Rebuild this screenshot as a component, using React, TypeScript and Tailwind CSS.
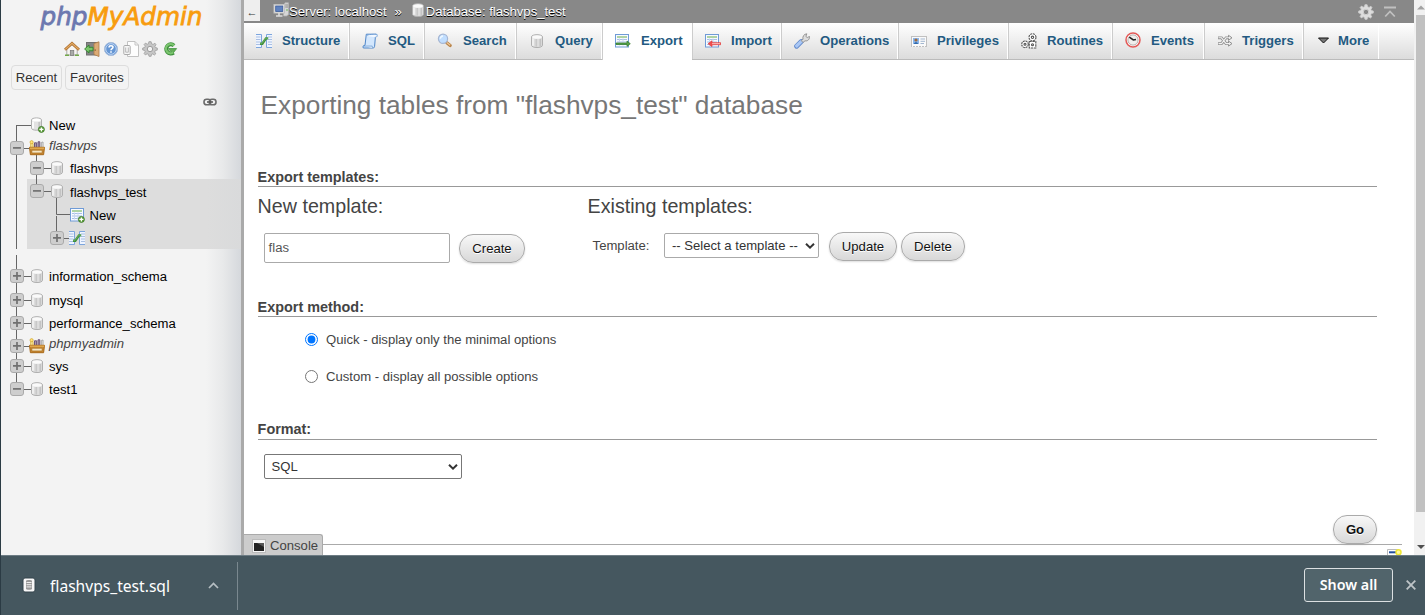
import React from "react";

type IconProps = { className?: string };

const Svg = ({ className = "", children }: { className?: string; children: React.ReactNode }) => (
  <svg viewBox="0 0 16 16" className={`h-4 w-4 shrink-0 ${className}`} fill="none">
    {children}
  </svg>
);

const DbIcon = ({ className }: IconProps) => (
  <Svg className={className}>
    <path d="M2.5 4C2.5 .9 13.5 .9 13.5 4V12.2C13.5 15.3 2.5 15.3 2.5 12.2Z" fill="#dcdcdc" stroke="#b0b0b0" />
    <path d="M4 5.2V12.8" stroke="#f4f4f4" strokeWidth="1.6" />
    <path d="M7.3 6V13.6" stroke="#c8c8c8" strokeWidth="1.6" />
    <path d="M9.3 6V13.6" stroke="#dedede" strokeWidth="1.4" />
    <path d="M11.3 6V13.2" stroke="#c3c3c3" strokeWidth="1.6" />
    <ellipse cx="8" cy="4" rx="4.9" ry="1.8" fill="#fafafa" />
  </Svg>
);

const Plus = () => (
  <>
    <circle cx="12.4" cy="12.4" r="3" fill="#5f9e3d" stroke="#3c7a28" strokeWidth=".8" />
    <path d="M12.4 10.4V14.4M10.4 12.4H14.4" stroke="#fff" strokeWidth="1.3" />
  </>
);

const DbNewIcon = () => (
  <Svg>
    <path d="M2.5 3C2.5 .2 12.5 .2 12.5 3V11C12.5 14 2.5 14 2.5 11Z" fill="#e2e2e2" stroke="#b0b0b0" />
    <path d="M4 4.5V11.5" stroke="#fafafa" strokeWidth="2" />
    <path d="M10.3 5V12" stroke="#c6c6c6" strokeWidth="2" />
    <ellipse cx="7.5" cy="3" rx="4.4" ry="1.6" fill="#fff" />
    <Plus />
  </Svg>
);

const TableBase = () => (
  <>
    <rect x="1.5" y="1.5" width="13" height="12.5" fill="#f7faff" stroke="#6f9bd6" />
    <path d="M3 4H13" stroke="#8fc27d" strokeWidth="1.4" />
    <path d="M3 6.5H13M3 9H13M3 11.5H13" stroke="#a9c0e6" />
    <path d="M5.5 5.5V12.5M9 5.5V12.5" stroke="#c9d7ee" />
  </>
);

const TableNewIcon = () => (
  <Svg>
    <TableBase />
    <Plus />
  </Svg>
);

const StructureIcon = ({ className }: IconProps) => (
  <Svg className={className}>
    <path d="M0 1.5H5.5V14.5H0M16 1.5H10.5V14.5H16" fill="#eef4ff" stroke="#7ca5dd" />
    <path d="M0 4H4.5M0 6.5H4.5M0 9H4.5M0 11.5H4.5M12 4H16M12 6.5H16M12 9H16M12 11.5H16" stroke="#a9bfe2" />
    <path d="M4 10.7H6.3L10 5.4H12.2" stroke="#3f8f3c" strokeWidth="2.4" />
    <path d="M4.3 10.4H6L9.8 5.2H12" stroke="#6db566" strokeWidth=".8" />
  </Svg>
);

const GroupIcon = () => (
  <Svg>
    <path d="M1.8 8V3.5H4V8" fill="#fff3b5" stroke="#d6ae35" />
    <circle cx="2.6" cy="2.2" r="1.6" fill="#ffe27c" stroke="#d1a52d" strokeWidth=".7" />
    <path d="M5.5 8V2.8H7.6V8M9 8V1.8H10.8V8" fill="#a797ad" stroke="#6d5478" />
    <path d="M12.3 7V2.5L14 2V7.5" fill="#f2f2f2" stroke="#a5a5a5" />
    <path d="M.5 7.3H15.5L14.6 14.7H1.4Z" fill="#c98a35" stroke="#a8691a" />
    <path d="M.8 8.2H15.2" stroke="#e3ab50" strokeWidth="1.4" />
    <path d="M2.8 10.2H13.2V13H2.8Z" fill="#f5e6c4" stroke="#a86a1a" strokeWidth=".7" />
  </Svg>
);

const HomeIcon = () => (
  <Svg>
    <path d="M2.8 8L8 3.5L13.2 8V14H2.8Z" fill="#f7f5f2" stroke="#aaa" />
    <rect x="6.3" y="9.5" width="3.5" height="5" fill="#a9aaa8" stroke="#777" strokeWidth=".7" />
    <path d="M1 8.7L8 2.3L15 8.7" stroke="#a6631f" strokeWidth="2.8" />
    <path d="M1.3 8.4L8 2.3L14.7 8.4" stroke="#e0a964" strokeWidth="1.4" />
    <path d="M1 14.3H5M11 14.3H15" stroke="#72a848" strokeWidth="1.6" />
  </Svg>
);

const ExitIcon = () => (
  <Svg>
    <rect x="2.5" y="1.5" width="12" height="12.5" fill="#858585" stroke="#707070" />
    <path d="M10 2.5L15 .8V15.5L10 13.5Z" fill="#dcab76" stroke="#ad7b47" strokeWidth=".8" />
    <path d="M11.2 8.5V9.7" stroke="#654018" />
    <path d="M.6 8L5 4V6.3H9V9.8H5V12Z" fill="#7cc56b" stroke="#2f862c" strokeWidth=".9" />
  </Svg>
);

const HelpIcon = () => (
  <Svg>
    <circle cx="8" cy="8" r="6.6" fill="#6596d4" stroke="#a9bedb" />
    <circle cx="8" cy="8" r="5.3" stroke="#d9e7fb" strokeWidth=".8" />
    <path d="M6 6.4C6 4.1 10 4.2 10 6.3C10 7.7 8 7.6 8 9.3" stroke="#fff" strokeWidth="1.5" />
    <path d="M8 10.3V11.8" stroke="#fff" strokeWidth="1.6" />
  </Svg>
);

const DocsIcon = () => (
  <Svg>
    <path d="M4.5 .5H12L15.5 4V15.5H4.5Z" fill="#fdfdfd" stroke="#c2c2c2" />
    <path d="M12 .5V4H15.5" stroke="#c2c2c2" />
    <rect x=".8" y="4.5" width="6.4" height="9" rx="1" fill="#f5f5f5" stroke="#aaa" />
    <path d="M2.7 6.5V11M5.3 6.5V11M2.5 11.2H5.5" stroke="#b7b7b7" />
  </Svg>
);

const GearShape = ({ fill, stroke, hole }: { fill: string; stroke: string; hole: string }) => (
  <>
    <path
      d="M6.9.7H9.1L9.6 2.8L11.1 3.4L12.9 2.2L14 3.7L12.9 5.3L13.4 6.6L15.3 7V9.1L13.3 9.5L12.7 11L13.8 12.8L12.4 14L10.8 12.9L9.5 13.4L9.1 15.3H7L6.5 13.4L5.1 12.8L3.4 13.9L2.1 12.6L3.2 10.8L2.6 9.4L.7 9V7L2.7 6.5L3.3 5.1L2.1 3.5L3.5 2.1L5.2 3.2L6.5 2.7Z"
      fill={fill}
      stroke={stroke}
      strokeWidth=".8"
    />
    <circle cx="8" cy="8" r="2.7" fill={hole} stroke={stroke} />
  </>
);

const ReloadIcon = () => (
  <Svg>
    <path d="M12 4.6A4.6 4.6 0 1 0 11.6 11.6" stroke="#3d8f3b" strokeWidth="4" />
    <path d="M6.3 7.6H14.6L10.7 12.6Z" fill="#64ad58" stroke="#3d8f3b" strokeWidth=".8" />
    <path d="M12 4.6A4.6 4.6 0 1 0 11.3 11.4" stroke="#7cc56f" strokeWidth="2.2" />
  </Svg>
);

const ServerIcon = () => (
  <Svg>
    <path d="M10.5 3.5L12 .8H15.5V12.5L13.5 14H10.5Z" fill="#d6d6d6" stroke="#b0b0b0" strokeWidth=".8" />
    <path d="M12.2 3H15M12.2 5H15" stroke="#8a8a8a" />
    <circle cx="14" cy="8" r=".8" fill="#5fb24a" />
    <rect x="1" y="2.5" width="10.5" height="8.5" fill="#eceae4" stroke="#c1c1c1" />
    <rect x="2.7" y="4" width="7.1" height="5.5" fill="#5f82c0" stroke="#3a5b9b" strokeWidth=".8" />
    <path d="M6 11V13.5M3 14H9.5" stroke="#ddd" strokeWidth="1.6" />
  </Svg>
);

const SqlIcon = () => (
  <Svg>
    <path d="M4.3 1.2H14C13 2.2 13.2 4 13.3 5L12.6 13.3C12.4 15 11.5 15 10.5 15H1.3C.5 13.5 1.2 12.3 3 12.3Z" fill="#d3e7fd" stroke="#4f86c8" />
    <path d="M4.4 3C4.6 1 13.6 1.4 15 1.3C15.6 3 15 4.2 13.4 4.2" fill="#f3f8ff" stroke="#5b91cf" strokeWidth=".8" />
    <path d="M1.2 13.1H10.3C10 14.3 10.5 15 11 15" fill="#f7fbff" stroke="#6397d0" strokeWidth=".8" />
  </Svg>
);

const SearchIcon = () => (
  <Svg>
    <path d="M9.8 9.8L13.2 12.6" stroke="#b98347" strokeWidth="3.2" strokeLinecap="round" />
    <path d="M9.8 9.5L13.2 12.3" stroke="#edc79a" strokeWidth="1.3" />
    <circle cx="6" cy="5.8" r="4.6" fill="#c0deff" stroke="#a5b6d3" strokeWidth="1.2" />
    <path d="M3.3 5.8A3 3 0 0 1 6 3" stroke="#eef7ff" strokeWidth="1.3" />
  </Svg>
);

const ExportIcon = () => (
  <Svg>
    <g transform="translate(-1 0)"><TableBase /></g>
    <path d="M1 10H12V8L15.3 10.7L12 13.4V11.5H1Z" fill="#5ba34a" stroke="#2f7a26" strokeWidth=".7" />
  </Svg>
);

const ImportIcon = () => (
  <Svg>
    <g transform="translate(-1 0)"><TableBase /></g>
    <path d="M15.6 9.7H7V7.8L3 10.7L7 13.6V11.7H15.6Z" fill="#f04e4e" stroke="#e23a3a" strokeWidth=".7" />
    <path d="M7 10.7H15" stroke="#ffd0cd" strokeWidth=".9" />
  </Svg>
);

const WrenchIcon = () => (
  <Svg>
    <path d="M2.6 13.2L7.3 8.5" stroke="#6189cb" strokeWidth="4.8" strokeLinecap="round" />
    <path d="M2.6 13L7.1 8.6" stroke="#a9c7f5" strokeWidth="3.2" strokeLinecap="round" />
    <path d="M7.3 7.6L9 6.3C8.3 3.5 10 1 12.8.8L11.9 3.4L13.2 4.5L15.5 3.5C15.8 6.2 13.7 8.5 11 7.8L9 9.5Z" fill="#ddd" stroke="#8c8c8c" strokeWidth=".9" />
  </Svg>
);

const PrivilegesIcon = () => (
  <Svg>
    <rect x=".5" y="3.5" width="15" height="10" fill="#fafafa" stroke="#c0c0c0" />
    <path d="M1 13.5H15" stroke="#f8f8f8" strokeDasharray="1 2" />
    <rect x="2" y="5" width="6" height="6" fill="#8ab6ec" />
    <circle cx="5" cy="7" r="1.6" fill="#a06b3d" />
    <path d="M3 11C3 8.8 7 8.8 7 11Z" fill="#2f68ab" />
    <path d="M9.5 6H14M9.5 8.3H14M9.5 10.5H13" stroke="#a3b7d0" />
  </Svg>
);

const RoutinesIcon = () => (
  <Svg>
    <g stroke="#555" strokeWidth="1.1" fill="#fff">
      <circle cx="11.5" cy="4.3" r="3.5" strokeDasharray="2 .75" />
      <circle cx="11.5" cy="4.3" r="1.2" />
      <circle cx="4" cy="11.3" r="3.3" strokeDasharray="2 .6" />
      <circle cx="4" cy="11.3" r="1" />
      <rect x="8.3" y="8.5" width="6.5" height="6.5" strokeDasharray="2.4 .7" />
      <circle cx="11.5" cy="11.7" r="1" />
    </g>
  </Svg>
);

const EventsIcon = () => (
  <Svg className="-mt-px">
    <circle cx="8" cy="8" r="7" fill="#fff" stroke="#e35a58" strokeWidth="1.5" />
    <circle cx="8" cy="8" r="5.1" fill="#f1efed" stroke="#b7afac" />
    <path d="M4.3 5.2L8.3 8L11 7.5" stroke="#222" strokeWidth="1.6" />
  </Svg>
);

const TriggersIcon = () => (
  <Svg>
    <path d="M1 4.8H4.5L9 10.6H12M1 10.6H4.5L9 4.8H12" stroke="#8f8f8f" strokeWidth="2.8" />
    <path d="M11.5 2.3L15 4.8L11.5 7.3ZM11.5 8.1L15 10.6L11.5 13.1Z" fill="#eee" stroke="#8f8f8f" />
    <path d="M1.5 4.8H4.5L9 10.6H12.5M1.5 10.6H4.5L9 4.8H12.5" stroke="#f2f2f2" strokeWidth="1.1" />
  </Svg>
);

const MoreIcon = () => (
  <Svg>
    <path d="M2.5 5H12.5L7.5 10Z" fill="#777" stroke="#111" />
  </Svg>
);

const LinkIcon = () => (
  <svg viewBox="0 0 14 8" className="h-2 w-3.5" fill="none">
    <rect x="1" y="1.2" width="6.6" height="5.6" rx="2.6" stroke="#6b6b6b" strokeWidth="1.6" />
    <rect x="6.4" y="1.2" width="6.6" height="5.6" rx="2.6" stroke="#6b6b6b" strokeWidth="1.6" />
    <path d="M4 4H10" stroke="#555" strokeWidth="1.5" />
  </svg>
);

const Expander = ({ open }: { open: boolean }) => (
  <svg viewBox="0 0 14 14" className="h-3.5 w-3.5 shrink-0">
    <rect x=".5" y=".5" width="13" height="13" rx="2.5" fill="#cecece" stroke="#aaa" />
    <path d={open ? "M3 6.9H11" : "M3 6.9H11M7 3V11"} stroke="#707070" strokeWidth="1.7" />
  </svg>
);

type Row = {
  label: string;
  height: string;
  indent: string;
  open?: boolean;
  icon: React.ReactNode;
  group?: boolean;
  gap: string;
};

const TreeRow = ({ row }: { row: Row }) => (
  <div className={`flex items-center ${row.height} ${row.indent}`}>
    <span className="flex w-[19px] shrink-0 items-center">{row.open !== undefined && <Expander open={row.open} />}</span>
    {row.icon}
    <span
      className={`whitespace-nowrap text-[13.12px] leading-4 ${row.gap} ${
        row.group ? "-mt-1 italic text-[#444]" : "mt-0.5 text-black"
      }`}
    >
      {row.label}
    </span>
  </div>
);

const topRows: Row[] = [
  { label: "New", height: "h-[22px]", indent: "pl-[9px]", icon: <DbNewIcon />, gap: "ml-1" },
  { label: "flashvps", height: "h-6", indent: "pl-[9px]", open: true, icon: <GroupIcon />, group: true, gap: "ml-1" },
];
const childRow: Row = { label: "flashvps", height: "h-4", indent: "pl-[29px]", open: true, icon: <DbIcon />, gap: "ml-[5px]" };
const selectedRows: Row[] = [
  { label: "flashvps_test", height: "h-6", indent: "pl-[3px]", open: true, icon: <DbIcon />, gap: "ml-[5px] pt-0.5" },
  { label: "New", height: "h-6", indent: "pl-[23px]", icon: <TableNewIcon />, gap: "ml-[4.5px]" },
  { label: "users", height: "h-[22px]", indent: "pl-[23px]", open: false, icon: <StructureIcon />, gap: "ml-[4.5px]" },
];
const bottomRows: Row[] = [
  { label: "information_schema", height: "h-[22px]", indent: "pl-[9px]", open: false, icon: <DbIcon />, gap: "ml-1" },
  { label: "mysql", height: "h-[26px]", indent: "pl-[9px]", open: false, icon: <DbIcon />, gap: "ml-1" },
  { label: "performance_schema", height: "h-5", indent: "pl-[9px]", open: false, icon: <DbIcon />, gap: "ml-1" },
  { label: "phpmyadmin", height: "h-[26px]", indent: "pl-[9px]", open: false, icon: <GroupIcon />, group: true, gap: "ml-1" },
  { label: "sys", height: "h-[14px]", indent: "pl-[9px]", open: false, icon: <DbIcon />, gap: "ml-1" },
  { label: "test1", height: "h-8", indent: "pl-[9px]", open: true, icon: <DbIcon />, gap: "ml-1" },
];

const Sidebar = () => (
  <aside className="flex w-[240px] shrink-0 flex-col bg-[linear-gradient(90deg,#f3f3f3_0,#f3f3f3_205px,#e8e9ea_222px,#d5d8dc_240px)]">
    <svg className="h-[34px] w-full" viewBox="1 0 240 34">
      <text
        x="40.5"
        y="25"
        fontSize="24.5"
        fontStyle="italic"
        fontFamily="DejaVu Sans, sans-serif"
        textLength="162"
        lengthAdjust="spacingAndGlyphs"
        strokeWidth=".8"
      >
        <tspan fill="#6c78af" stroke="#6c78af">php</tspan>
        <tspan fill="#f89c0e" stroke="#f89c0e">MyAdmin</tspan>
      </text>
    </svg>
    <div className="flex h-[30px] items-center gap-[3.6px] pl-[63px]">
      <HomeIcon />
      <ExitIcon />
      <HelpIcon />
      <DocsIcon />
      <Svg><GearShape fill="#c6c6c6" stroke="#9c9c9c" hole="#f4f4f4" /></Svg>
      <ReloadIcon />
    </div>
    <div className="mt-px flex gap-[3px] pl-[10px] text-[13.1px] text-[#333]">
      <span className="flex h-[25px] w-[51px] items-center justify-center rounded border border-[#ddd]">Recent</span>
      <span className="flex h-[25px] w-[64px] items-center justify-center rounded border border-[#ddd]">Favorites</span>
    </div>
    <div className="flex h-6 items-center pl-[202px]">
      <LinkIcon />
    </div>
    <div className="relative">
      <svg className="absolute left-0 top-0 h-[290px] w-[100px]" viewBox="1 114 100 290" fill="none">
        <rect x="27" y="179" width="74" height="70" fill="#ddd" />
        <path
          stroke="#666"
          d="M16.5 125V249M16.5 255V389M16 125.5H31M24 148.5H30M36.5 155V190M44 168.5H51M44 191.5H51M56.5 198V214.5H70M56.5 216V231M64 238.5H70M24 276.5H31M24 300.5H31M24 323.5H31M24 346.5H30M24 366.5H31M24 389.5H31"
        />
      </svg>
      <div className="relative">
        {topRows.map((r) => <TreeRow key={r.label} row={r} />)}
        <TreeRow row={childRow} />
        <div className="ml-[26px] mt-[3px] bg-[linear-gradient(90deg,transparent_0,transparent_70px,#ddd_70px,#ddd_180px,#d9dadb_214px)]">
          {selectedRows.map((r) => <TreeRow key={r.label} row={r} />)}
        </div>
        <div className="mt-4">{bottomRows.map((r) => <TreeRow key={r.label} row={r} />)}</div>
      </div>
    </div>
  </aside>
);

const tabs = [
  { label: "Structure", width: "w-[105px]", icon: <StructureIcon /> },
  { label: "SQL", width: "w-[75px]", icon: <SqlIcon /> },
  { label: "Search", width: "w-[92px]", icon: <SearchIcon /> },
  { label: "Query", width: "w-[86px]", icon: <DbIcon /> },
  { label: "Export", width: "w-[90px]", icon: <ExportIcon /> },
  { label: "Import", width: "w-[89px]", icon: <ImportIcon /> },
  { label: "Operations", width: "w-[117px]", icon: <WrenchIcon /> },
  { label: "Privileges", width: "w-[110px]", icon: <PrivilegesIcon /> },
  { label: "Routines", width: "w-[104px]", icon: <RoutinesIcon /> },
  { label: "Events", width: "w-[92px]", icon: <EventsIcon /> },
  { label: "Triggers", width: "w-[99px]", icon: <TriggersIcon /> },
  { label: "More", width: "w-[76px]", icon: <MoreIcon /> },
];

const TopBar = () => (
  <header className="flex h-[23px] items-start bg-[#888] text-[13.1px] text-white">
    <span className="flex h-[21px] w-4 items-center justify-center bg-[#eee] pt-1 text-[11px] text-[#333]">←</span>
    <div className="flex h-[23px] items-center pl-[13px] [text-shadow:0_1px_0_#000]">
      <div className="-mt-1"><ServerIcon /></div>
      <span>Server: localhost</span>
      <span className="ml-2">»</span>
      <div className="-mt-1 ml-2"><DbIcon /></div>
      <span>Database: flashvps_test</span>
    </div>
    <div className="ml-auto flex h-[23px] items-center gap-[10px] pr-[18px]">
      <Svg><GearShape fill="#ddd" stroke="#cfcfcf" hole="#888" /></Svg>
      <svg viewBox="0 0 12 12" className="h-3 w-3" fill="none" stroke="#c0c0c0" strokeWidth="1.8">
        <path d="M0 1.5H12M1.2 10.5L6 5.5L10.8 10.5" />
      </svg>
    </div>
  </header>
);

const Tabs = () => (
  <nav className="flex h-[37px] border-b border-[#bbb] bg-linear-to-b from-white to-[#dcdcdc]">
    {tabs.map((t) => (
      <div
        key={t.label}
        className={`flex shrink-0 items-center border-r border-r-white pl-3 text-[13.12px] font-bold text-[#235a81] ${t.width} ${
          t.label === "Structure" ? "" : "border-l border-l-[#ccc]"
        } ${t.label === "Export" ? "mb-[-1px] bg-white pb-0.5" : "pb-px"}`}
      >
        {t.icon}
        <span className={t.label === "More" ? "ml-1.5" : t.label === "Triggers" ? "ml-[9px]" : "ml-2.5"}>{t.label}</span>
      </div>
    ))}
  </nav>
);

const Legend = ({ className = "h-[19px]", children }: { className?: string; children: React.ReactNode }) => (
  <h2 className={`border-b border-[#999] text-[14.4px] font-bold leading-[18px] text-[#444] ${className}`}>{children}</h2>
);

const Button = ({ className, children }: { className: string; children: React.ReactNode }) => (
  <button
    className={`flex items-center justify-center rounded-[14px] border border-[#aaa] bg-linear-to-b from-[#f8f8f8] to-[#d8d8d8] text-[13.1px] text-[#111] shadow-[0_1px_2px_#ddd] [text-shadow:0_1px_0_#fff] ${className}`}
  >
    {children}
  </button>
);

const Select = ({ className, children }: { className: string; children: string }) => (
  <div className={`flex h-[25px] items-center justify-between rounded-[2px] border bg-white text-[13.1px] text-[#333] ${className}`}>
    <span className="whitespace-nowrap">{children}</span>
    <svg viewBox="0 0 10 6" className="h-1.5 w-2.5 shrink-0" fill="none" stroke="#333" strokeWidth="2">
      <path d="M1 .8L5 4.6L9 .8" />
    </svg>
  </div>
);

const Main = () => (
  <main className="flex w-[1170px] shrink-0 flex-col overflow-hidden bg-white text-[13.12px] text-[#444]">
    <TopBar />
    <Tabs />
    <div className="pl-[13.6px] pr-[37px]">
      <h1 className="flex h-[108px] items-start pl-[3px] pt-[30px] text-[26.24px] leading-[30px] text-[#777]">
        Exporting tables from "flashvps_test" database
      </h1>
      <Legend>Export templates:</Legend>
      <div className="flex h-[111px]">
        <section className="w-[330px]">
          <h3 className="mt-[7px] text-[19.68px] leading-6">New template:</h3>
          <div className="mt-[15px] flex pl-[6.4px]">
            <div className="flex h-[30px] w-[186px] items-center rounded-[2px] border border-[#aaa] pl-[3.6px] text-[#555]">flas</div>
            <Button className="ml-[9px] mt-px h-[29px] w-[66px]">Create</Button>
          </div>
        </section>
        <section>
          <h3 className="mt-[7px] text-[19.68px] leading-6">Existing templates:</h3>
          <div className="mt-[14px] flex items-start pl-[5px]">
            <span className="w-[71.4px] pt-1.5 leading-4">Template:</span>
            <Select className="mt-px w-[155px] border-[#aaa] pl-[7px] pr-[3px]">-- Select a template --</Select>
            <Button className="ml-[10px] h-[29px] w-[68px]">Update</Button>
            <Button className="ml-1 h-[29px] w-[64px]">Delete</Button>
          </div>
        </section>
      </div>
      <Legend>Export method:</Legend>
      <div className="flex h-[103px] flex-col gap-[21px] pl-[47.4px] pt-[15px] leading-4">
        <label className="flex items-center gap-2">
          <input type="radio" name="method" defaultChecked className="mb-0.5 h-[13px] w-[13px]" />
          Quick - display only the minimal options
        </label>
        <label className="flex items-center gap-2">
          <input type="radio" name="method" className="mb-0.5 h-[13px] w-[13px]" />
          Custom - display all possible options
        </label>
      </div>
      <Legend className="h-5">Format:</Legend>
      <div className="h-[75px] pl-[6.4px] pt-[14px]">
        <Select className="w-[198px] border-[#777] pl-[6.5px] pr-[3px]">SQL</Select>
      </div>
      <div className="flex justify-end">
        <Button className="h-[29px] w-[44px] font-bold">Go</Button>
      </div>
    </div>
    <div className="mt-[-10px] flex h-[21px]">
      <div className="flex w-[79px] items-center rounded-tr-[3px] border-r border-t border-[#aaa] bg-[#ccc] pl-2 pt-px">
        <svg viewBox="0 0 14 14" className="mr-1 h-3.5 w-3.5">
          <rect x=".5" y=".5" width="13" height="13" fill="#f6f6f6" stroke="#bbb" />
          <rect x="2" y="4" width="10" height="8" fill="#222" />
          <path d="M5 4H12V8Z" fill="#555" />
        </svg>
        <span className="text-[#444]">Console</span>
      </div>
      <div className="mr-3 mt-2.5 flex flex-1 items-start justify-end border-t border-[#aaa]">
        <svg viewBox="0 0 15 7" className="mt-1 h-[7px] w-[15px]">
          <path d="M.5 7V.5H11" fill="#fff" stroke="#bbb" />
          <path d="M2 3.3H10" stroke="#214e9e" strokeWidth="2" />
          <circle cx="11.5" cy="3.3" r="2.5" fill="#fff9a2" stroke="#efe735" strokeWidth="1.5" />
        </svg>
      </div>
    </div>
  </main>
);

const Scrollbar = () => (
  <div className="flex w-[11px] shrink-0 flex-col items-end bg-[#f1f1f1]">
    <svg viewBox="0 0 9 15" className="h-[15px] w-[9px]"><path d="M1 9.5L5 5.5L9 9.5Z" fill="#a3a3a3" /></svg>
    <div className="h-[497px] w-[9px] bg-[#c1c1c1]" />
    <svg viewBox="0 0 9 10" className="mt-[30px] h-2.5 w-[9px]"><path d="M1 3L5 7L9 3Z" fill="#505050" /></svg>
  </div>
);

const DownloadBar = () => (
  <footer className="flex h-[60px] items-center border-t border-[#6d7c84] bg-[#45575f] font-['Noto_Sans','Open_Sans',sans-serif] text-white">
    <svg viewBox="0 0 14 16" className="mb-px ml-[21px] h-4 w-3.5">
      <rect x="1" y="1" width="12" height="14" rx="2" fill="#f8f8f8" stroke="#34444c" />
      <path d="M4 4C4 2.8 10 2.8 10 4V11.7C10 13 4 13 4 11.7Z" fill="#999" />
      <path d="M4.5 5.5H9.5M4.5 7.7H9.5M4.5 9.9H9.5" stroke="#eee" />
    </svg>
    <svg className="ml-3.5 h-7 w-[122px]" viewBox="0 0 122 28">
      <text x="0" y="19.5" fontSize="16.5" fill="#fff" textLength="120" lengthAdjust="spacingAndGlyphs">flashvps_test.sql</text>
    </svg>
    <svg viewBox="0 0 11 7" className="ml-[36px] h-[7px] w-[11px]" fill="none" stroke="#b7bfc3" strokeWidth="1.7">
      <path d="M1 6L5.5 1.5L10 6" />
    </svg>
    <div className="ml-[18px] h-12 w-px bg-[#7a888f]" />
    <button className="mb-0.5 ml-auto flex h-[34px] w-[89px] items-center justify-center rounded-[3px] border border-[#dce0e2] bg-[#51646b] text-[14.3px] font-semibold">
      Show all
    </button>
    <svg viewBox="0 0 10 10" className="mb-0.5 ml-[13px] mr-[9px] h-2.5 w-2.5" stroke="#bec4c7" strokeWidth="1.8">
      <path d="M.7.7L9.3 9.3M9.3.7L.7 9.3" />
    </svg>
  </footer>
);

export default function App() {
  return (
    <div className="flex h-[615px] w-[1425px] flex-col overflow-hidden border-l border-[#2b3b44] font-['Liberation_Sans',Arial,sans-serif]">
      <div className="flex h-[555px] shrink-0 overflow-hidden">
        <Sidebar />
        <div className="w-[3px] shrink-0 bg-[#aaa]" />
        <Main />
        <Scrollbar />
      </div>
      <DownloadBar />
    </div>
  );
}
